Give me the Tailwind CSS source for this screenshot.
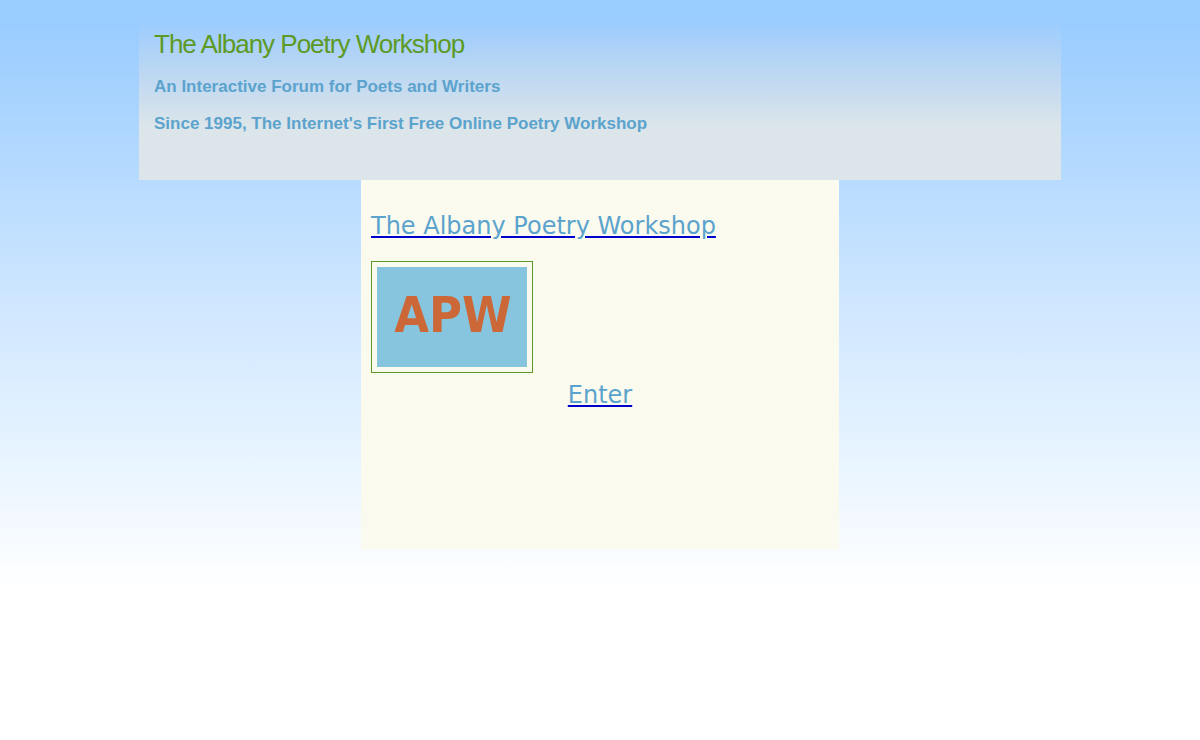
<!DOCTYPE html>
<html lang="en">
<head>
<meta charset="utf-8">
<meta name="viewport" content="width=device-width, initial-scale=1">
<title>The Albany Poetry Workshop</title>
<script src="https://cdn.jsdelivr.net/npm/@tailwindcss/browser@4"></script>
</head>
<body class="min-h-screen bg-white bg-[linear-gradient(to_bottom,#99ccff_0px,#99ccff_20px,#b7dbff_180px,#d2e8ff_320px,#e3f2ff_430px,#ffffff_590px)] bg-no-repeat">
<header class="mx-auto min-h-[180px] w-full max-w-[922px] bg-[linear-gradient(to_bottom,#99ccff_20px,#aed2f7_50px,#c0d9f1_80px,#dbe5ea_125px)] px-[15px] pt-7 font-['Liberation_Sans',Arial,sans-serif]">
  <h1 class="text-[26px] leading-8 tracking-[-1px] text-[#5c9a25]">The Albany Poetry Workshop</h1>
  <p class="mt-[17px] text-[17px] leading-5 font-bold text-[#5ba3cd]">An Interactive Forum for Poets and Writers</p>
  <p class="mt-[17px] text-[17px] leading-5 font-bold text-[#5ba3cd]">Since 1995, The Internet's First Free Online Poetry Workshop</p>
</header>
<main class="mx-auto min-h-[369px] w-full max-w-[478px] bg-[#fafaee] px-[10px] pt-8 font-['DejaVu_Sans',Verdana,sans-serif] text-2xl leading-7 text-[#5ba3cd]">
  <h2><a href="#" class="underline decoration-[#0000cc]">The Albany Poetry Workshop</a></h2>
  <a href="#" class="mt-[21px] block w-fit border border-[#5c9a25] p-[5px]">
    <svg class="block" width="150" height="100" viewBox="0 0 150 100" role="img" aria-label="APW">
      <rect width="150" height="100" fill="#87c5df"/>
      <text x="76" y="65" text-anchor="middle" font-family="'DejaVu Sans Condensed','DejaVu Sans',sans-serif" font-weight="bold" font-size="50" fill="#cc6838">APW</text>
    </svg>
  </a>
  <p class="mt-2 text-center"><a href="#" class="underline decoration-[#0000cc]">Enter</a></p>
</main>
</body>
</html>
